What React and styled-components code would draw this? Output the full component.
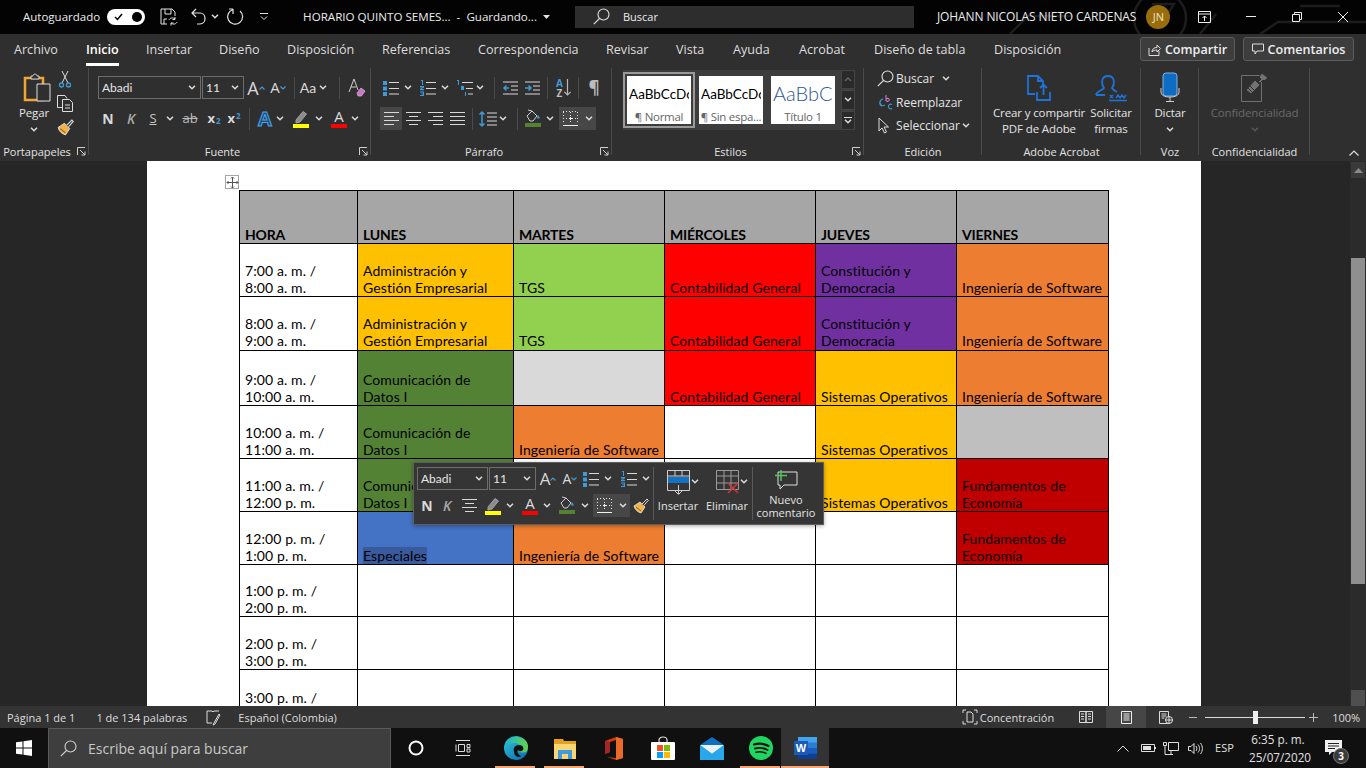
import React from "react";
import styled, { createGlobalStyle } from "styled-components";

const UI = `"Open Sans", "Noto Sans", "Liberation Sans", sans-serif`;
const Global = createGlobalStyle`
  html, body { margin: 0; padding: 0; background: #262626; }
  * { box-sizing: border-box; }
  #root { width: 1366px; height: 768px; overflow: hidden; }
`;

const Screen = styled.div`
  width: 1366px; height: 768px; display: flex; flex-direction: column;
  font-family: ${UI}; font-size: 12px; color: #e6e6e6; overflow: hidden; position: relative;
`;

/* ---------- drawing helpers ---------- */
const BLUE = "#3f9ad6";
const LN = "#d8d8d8";
const Svg = styled.svg`display: block; flex: none; overflow: visible;`;
const Ic = ({ w, h, children }) => (
  <Svg width={w} height={h} viewBox={`0 0 ${w} ${h}`} fill="none" stroke={LN} strokeWidth="1">{children}</Svg>
);
const Chev = ({ c = "#dcdcdc" }) => (
  <Ic w={8} h={5}><path d="M1 .8 4 3.8 7 .8" stroke={c} strokeWidth="1.5" /></Ic>
);
const Bullets = () => (
  <Ic w={16} h={16}>
    <path d="M0 1h4v4H0zM0 6.5h4v4H0zM0 12h4v4H0z" fill={BLUE} stroke="none" />
    <path d="M6 2.5h10M6 8.5h10M6 14h10" />
  </Ic>
);
const Numbers = () => (
  <Ic w={16} h={16}>
    <path d="M1 0h2v5H2V1H1zM0 6h4v1.4L1.6 9H4v1.2H0V9l2.4-1.6H0zM0 11.5h4v4.5H0v-1h3v-.8H1v-.8h2v-.8H0z" fill={BLUE} stroke="none" />
    <path d="M6 2.5h10M6 8.5h10M6 14h10" />
  </Ic>
);
const Multi = () => (
  <Ic w={16} h={16}>
    <path d="M0 0h2v5H1V1H0zM4 6h3v4H4zM8 12h1v4H8z" fill={BLUE} stroke="none" />
    <path d="M5 2.5h11M9 8.5h7M11 14h5" />
  </Ic>
);
const Indent = ({ right }) => (
  <Ic w={15} h={14}>
    <path d="M0 1h15M8 5h7M8 9h7M0 13h15" />
    {right
      ? <path d="M0 7h5M3.5 4.5 6 7l-2.5 2.5" stroke={BLUE} strokeWidth="1.5" />
      : <path d="M6 7H1M3.5 4.5 1 7l2.5 2.5" stroke={BLUE} strokeWidth="1.5" />}
  </Ic>
);
const SortArrow = () => (
  <Ic w={7} h={17}>
    <path d="M3.500 0v16M.3 12.800 3.500 16l3.200-3.200" stroke="#b8b8b8" strokeWidth="1.2" />
  </Ic>
);
const SortLetters = styled.span`
  display: flex; flex-direction: column; align-items: center; font-size: 10px; font-weight: 700; line-height: 10px; color: #bdbdbd; flex: none;
`;
const SortTop = styled.span`color: ${BLUE};`;
const Align = ({ kind = "left", c = LN }) => {
  const d = {
    left: "M0 .5h15M0 4.5h10M0 8.5h15M0 12.5h10",
    center: "M0 .5h15M3 4.5h9M0 8.5h15M3 12.5h9",
    right: "M0 .5h15M5 4.5h10M0 8.5h15M5 12.5h10",
    justify: "M0 .5h15M0 4.5h15M0 8.5h15M0 12.5h15",
  }[kind];
  return <Ic w={15} h={13}><path d={d} stroke={c} /></Ic>;
};
const Spacing = () => (
  <Ic w={18} h={16}>
    <path d="M3 1v14M.5 3.5 3 1l2.5 2.5M.5 12.5 3 15l2.5-2.5" stroke={BLUE} strokeWidth="1.5" />
    <path d="M8 2h10M8 6h10M8 10h10M8 14h10" />
  </Ic>
);
const Bucket = () => (
  <Ic w={16} h={19}>
    <path d="M2 7 7 2l5 5-4 5H5z" stroke="#cfcfcf" />
    <path d="M7 2 3 1" stroke="#cfcfcf" />
    <path d="M13 6c1 1.500 1.800 2.500 1.800 3.500h-2.600C12.200 8.500 12 7 13 6z" fill={BLUE} stroke="none" />
    <rect x="0" y="14" width="16" height="4" fill="#548235" stroke="none" />
  </Ic>
);
const Borders = () => (
  <Ic w={15} h={15}>
    <path d="M0 .5h15M0 7.500h15M.5 1v12M7.500 1v12M14.500 1v12" strokeDasharray="1 2" stroke="#e0e0e0" />
    <path d="M0 14.500h15" stroke="#f0f0f0" />
    <path d="M6 7.500h3M7.500 6v3" stroke="#f0f0f0" />
  </Ic>
);
const Pen = () => (
  <Ic w={16} h={18}>
    <path d="M3 10 10 1.500l3.500 2.500L7 12l-4 1z" stroke="#a0a0a0" fill="#8c8c8c" />
    <rect x="0" y="14" width="16" height="4" fill="#ffff00" stroke="none" />
  </Ic>
);
const Launcher = () => (
  <Ic w={9} h={9}>
    <path d="M.5 8V.5H8M3 3l5 5M8 4.500V8H4.500" stroke="#cfcfcf" />
  </Ic>
);
const BrushIcon = ({ s = 16 }) => (
  <Svg width={s} height={s} viewBox="0 0 16 16" fill="none">
    <path d="M1 8 7 4l5 5-4 6C5 14 2 12 1 8z" fill="#f0b34a" stroke="#e9e9e9" strokeWidth=".8" />
    <path d="M9 6 14 1l1.300 1.300-4.500 5.200" fill="#333" stroke="#dcdcdc" strokeWidth="1" />
    <path d="M3 9l5 4" stroke="#8a6420" />
  </Svg>
);
const ClearFmt = () => (
  <Ic w={17} h={20}>
    <path d="M1 14 6 1l4 11" stroke="#cfcfcf" />
    <path d="M3 9h5" stroke="#cfcfcf" />
    <path d="M9 15l4-5 4 3-3.500 5H10z" fill="#c778c4" stroke="#e6b4e6" strokeWidth=".7" />
  </Ic>
);
const GrowCaret = ({ down }) => (
  <Ic w={6} h={4}><path d={down ? "M.5.5 3 3 5.500.5" : "M.5 3.500 3 1l2.500 2.500"} stroke={BLUE} strokeWidth="1.200" /></Ic>
);
const Search = ({ s = 17, c = "#e0e0e0" }) => (
  <Svg width={s} height={s} viewBox="0 0 17 17" fill="none" stroke={c} strokeWidth="1.100">
    <circle cx="10.500" cy="6.500" r="5.500" /><path d="M6.500 10.500.8 16.200" />
  </Svg>
);

/* ---------- title bar ---------- */
const TitleBar = styled.div`
  height: 34px; flex: none; background: #030303; display: flex; align-items: center; position: relative; overflow: hidden; padding-bottom: 1px;
`;
const TitleArt = styled.svg`position: absolute; left: 860px; top: 0;`;
const TitleText = styled.span`
  font-size: ${p => p.$fs || 12}px; margin-left: ${p => p.$ml || 0}px; white-space: nowrap; color: #ececec; position: relative;
  letter-spacing: ${p => p.$ls || 0}px;
`;
const Toggle = styled.span`
  width: 38px; height: 16px; border-radius: 8px; background: #fff; margin-left: 7px; display: flex; align-items: center;
  justify-content: space-between; padding: 0 3px 0 7px; flex: none;
`;
const Knob = styled.i`width: 10px; height: 10px; background: #000; border-radius: 50%; display: block;`;
const QSlot = styled.span`
  margin-left: ${p => p.$ml || 0}px; display: flex; align-items: center; position: relative; flex: none;
`;
const SearchBox = styled.div`
  width: 339px; height: 22px; background: #2d2d2d; margin-left: 25px; display: flex; align-items: center; padding-left: 18px; flex: none;
  font-size: 12px; position: relative;
`;
const Avatar = styled.span`
  width: 24px; height: 24px; border-radius: 50%; background: #9a6d0c; color: #f1e3c2; margin-left: 10px; flex: none; position: relative;
  display: flex; align-items: center; justify-content: center; font-size: 11px;
`;

/* ---------- tabs ---------- */
const TabBar = styled.div`
  height: 32px; flex: none; background: #2f2f2f; display: flex; align-items: center; position: relative;
`;
const Tab = styled.span`
  font-size: 12.6px; width: ${p => p.$w}px; flex: none; white-space: nowrap; color: ${p => (p.$on ? "#fff" : "#dedede")};
  padding-left: 14px; height: 32px; line-height: 31px; position: relative; font-weight: ${p => (p.$on ? 600 : 400)};
  &::after {
    content: ""; display: ${p => (p.$on ? "block" : "none")}; position: absolute; left: 14px; bottom: 0; width: 33px; height: 3px; background: #fff;
  }
`;
const TabRight = styled.div`margin-left: auto; display: flex; gap: 8px; padding: 0 12px 2px 0;`;
const HeadBtn = styled.span`
  height: 24px; width: ${p => p.$w}px; border: 1px solid #5d5d5d; border-radius: 3px; background: #3d3d3d; display: flex; align-items: center;
  justify-content: center; gap: 4px; font-size: 12.6px; font-weight: 600; color: #eee;
`;

/* ---------- ribbon ---------- */
const Ribbon = styled.div`height: 95px; flex: none; background: #2f2f2f; display: flex; position: relative;`;
const Group = styled.div`
  width: ${p => p.$w}px; flex: none; height: 100%; position: relative; display: flex; flex-direction: column;
  &::after { content: ""; position: absolute; right: 0; top: 2px; bottom: 6px; width: 1px; background: #4b4b4b; display: ${p => (p.$last ? "none" : "block")}; }
`;
const GroupBody = styled.div`
  flex: 1; min-height: 0; display: flex; flex-direction: ${p => p.$dir || "column"}; padding-top: ${p => p.$pt ?? 0}px; padding-left: ${p => p.$pl || 0}px;
`;
const GroupLabel = styled.div`
  height: 18px; flex: none; text-align: center; font-size: 11px; line-height: 18px; color: #e2e2e2; white-space: nowrap;
  padding-right: ${p => (p.$launch ? 15 : 0)}px;
`;
const LaunchSlot = styled.span`position: absolute; right: 3px; bottom: 5px; display: block;`;
const Row = styled.div`
  display: flex; align-items: center; height: ${p => p.$h || 23}px; padding-left: ${p => p.$pl || 0}px; flex: none;
  margin-top: ${p => p.$mt || 0}px;
`;
const Slot = styled.span`
  width: ${p => p.$w}px; height: 23px; margin-left: ${p => p.$ml || 0}px; flex: none; display: flex; align-items: center; justify-content: center;
  gap: ${p => p.$gap || 0}px; background: ${p => (p.$sel ? "#474747" : "transparent")};
`;
const VSep = styled.i`display: block; width: 1px; height: 22px; background: #4b4b4b; margin-left: ${p => p.$ml || 0}px; flex: none;`;
const Select = styled.span`
  width: ${p => p.$w}px; height: 23px; border: 1px solid #6d6d6d; display: flex; align-items: center; justify-content: space-between;
  padding: 0 4px 0 3px; font-size: 12px; flex: none; margin-left: ${p => p.$ml || 0}px; color: #e6e6e6;
  font-family: "Lato", ${UI};
`;
const Glyph = styled.span`
  font-family: ${p => p.$f || UI}; font-size: ${p => p.$s || 14}px; font-weight: ${p => p.$b || 400}; font-style: ${p => (p.$i ? "italic" : "normal")};
  color: ${p => p.$c || "#d9d9d9"}; text-decoration: ${p => p.$d || "none"}; line-height: 1; display: flex; align-items: baseline; flex: none;
`;
const Sub = styled.span`font-size: 8px; color: ${BLUE}; margin-left: 1px; align-self: ${p => (p.$up ? "flex-start" : "flex-end")};`;
const ColorA = styled.span`
  display: flex; flex-direction: column; align-items: center; width: 16px; font-size: 15px; line-height: 14px; color: #dcdcdc;
  &::after { content: ""; display: block; width: 16px; height: 4px; background: ${p => p.$c}; margin-top: 1px; }
`;
const OutlineA = styled.span`
  font-size: 20px; font-weight: 700; color: #1d4f80; -webkit-text-stroke: 1px #4aa3e6; line-height: 1;
`;
const Big = styled.div`
  width: ${p => p.$w}px; margin-left: ${p => p.$ml || 0}px; flex: none; display: flex; flex-direction: column; align-items: center; padding-top: 4px;
  color: ${p => (p.$off ? "#6a6a6a" : "#e4e4e4")}; font-size: 11.5px; letter-spacing: -.12px;
`;
const BigIcon = styled.div`height: 35px; display: flex; align-items: center; justify-content: center; padding-left: ${p => p.$pl || 0}px;`;
const BigText = styled.div`line-height: 16px; text-align: center; white-space: nowrap;`;
const BigChev = styled.div`height: 16px; display: flex; align-items: center;`;
const SmallCol = styled.div`display: flex; flex-direction: column; align-items: center; width: 20px; padding-top: 5px; gap: 7px; margin-left: ${p => p.$ml || 0}px;`;
const Gallery = styled.div`
  width: 232px; height: 60px; margin: 4px 0 0 11px; background: #3d3d3d; display: flex; position: relative; padding: 6px 0 0 4px; gap: 8px;
`;
const StyleCard = styled.div`
  width: 64px; height: 48px; background: #fff; display: flex; flex-direction: column; align-items: center; justify-content: space-between;
  overflow: hidden; flex: none; margin-right: ${p => p.$mr || 0}px; outline: ${p => (p.$sel ? "2px solid #9a9a9a" : "none")}; outline-offset: 2px;
`;
const StylePreview = styled.div`
  font-family: "Lato", ${UI}; font-size: ${p => (p.$title ? 20 : 13.5)}px; font-weight: ${p => (p.$title ? 300 : 400)};
  color: ${p => (p.$title ? "#2f5496" : "#000")}; white-space: nowrap; width: 60px; overflow: hidden; margin-top: ${p => (p.$title ? 7 : 10)}px; line-height: ${p => (p.$title ? 20 : 16)}px;
`;
const StyleName = styled.div`font-size: 11.5px; letter-spacing: -.3px; color: #666; white-space: nowrap; line-height: 16px; margin-bottom: -1px; width: 64px; overflow: hidden; text-align: center;`;
const GalleryArrows = styled.div`position: absolute; right: 0; top: 0; width: 14px; height: 60px; display: flex; flex-direction: column; gap: 1px;`;
const GalleryArrow = styled.span`flex: 1; background: #2a2a2a; border: 1px solid #444; display: flex; align-items: center; justify-content: center; flex-direction: column; gap: 1px;`;
const EditRow = styled.div`height: 23.5px; display: flex; align-items: center; padding-left: ${p => p.$pl ?? 13}px; gap: ${p => p.$gap ?? 2}px; font-size: 12px; color: #e4e4e4;`;
const Collapse = styled.span`position: absolute; right: 7px; bottom: 5px; display: block;`;

/* ---------- document ---------- */
const DocArea = styled.div`flex: 1; min-height: 0; background: #262626; display: flex; position: relative; overflow: hidden;`;
const Page = styled.div`
  width: 1054px; margin-left: 147px; background: #fff; padding: 29px 0 0 92px; flex: none; overflow: hidden; position: relative;
`;
const Table = styled.div`
  display: grid; width: 870px; gap: 1px; background: #000; padding: 1px 1px 0; position: relative;
  grid-template-columns: 117px 155px 150px 150px 140px 151px;
  grid-template-rows: 52px 52px 53px 54px 52px 52px 52px 51px 52px 60px;
  font-family: "Lato", "Noto Sans", sans-serif; font-size: 14px; line-height: 17px; color: #000;
`;
const Cell = styled.div`
  background: ${p => p.$bg || "#fff"}; display: flex; flex-direction: column; justify-content: flex-end; padding: 0 4px ${p => p.$pb || 0}px 5px; white-space: nowrap;
  font-weight: ${p => (p.$head ? 700 : 400)}; letter-spacing: ${p => (p.$head ? "-.2px" : ".1px")};
  ${p => (p.$clip ? "justify-content: flex-start; padding-top: 19px;" : "")}
`;
const Selected = styled.span`background: #3a5a9e; align-self: flex-start;`;
const MoveHandle = styled.span`
  position: absolute; left: 78px; top: 14px; width: 14px; height: 14px; border: 1px solid #a6a6a6; background: #fff; display: flex; align-items: center; justify-content: center;
`;
const ScrollBar = styled.div`
  width: 16px; margin-left: auto; flex: none; background: #2b2b2b; display: flex; flex-direction: column; align-items: center; padding: 1px 1px 0;
`;
const ScrollBtn = styled.span`width: 14px; height: 16px; background: #3a3a3a; display: flex; align-items: center; justify-content: center; flex: none;`;
const ScrollThumb = styled.span`width: 14px; height: 326px; background: #8f8f8f; margin-top: 80px; flex: none; display: block;`;
const ScrollBottom = styled.span`width: 14px; height: 16px; background: #4f4f4f; margin-top: auto; display: block; flex: none;`;

/* ---------- floating toolbar ---------- */
const Mini = styled.div`
  position: absolute; left: 413px; top: 301px; width: 411px; height: 63px; background: #353535; border: 1px solid #5e5e5e;
  display: flex; font-size: 11.5px; color: #e4e4e4; box-shadow: 0 1px 4px rgba(0,0,0,.35);
`;
const MiniLeft = styled.div`width: 239px; flex: none; padding: 5px 0 0 3px; display: flex; flex-direction: column; gap: 5px;`;
const MiniSep = styled.i`display: block; width: 1px; height: 53px; margin: 4px 0 0 ${p => p.$ml || 0}px; background: #5a5a5a; flex: none;`;
const MiniBtn = styled.div`
  width: ${p => p.$w}px; margin-left: ${p => p.$ml || 0}px; flex: none; display: flex; flex-direction: column; align-items: center; padding-top: 7px; white-space: nowrap;
`;
const MiniIcon = styled.div`height: ${p => p.$h}px; position: relative; flex: none;`;
const MiniChev = styled.span`position: absolute; left: calc(100% + 1px); top: 9px; display: block;`;
const MiniText = styled.div`line-height: 13px; text-align: center; font-size: 11px;`;

/* ---------- status bar ---------- */
const StatusBar = styled.div`
  height: 22px; flex: none; background: #333; display: flex; align-items: center; font-size: 11px; color: #ddd; white-space: nowrap;
`;
const SText = styled.span`margin-left: ${p => p.$ml || 0}px; flex: none; font-size: 11px;`;
const SIcon = styled.span`
  margin-left: ${p => p.$ml || 0}px; flex: none; display: flex; align-items: center; justify-content: center; height: 22px; width: ${p => p.$w}px;
  background: ${p => (p.$sel ? "#464646" : "transparent")};
`;
const Slider = styled.span`
  width: 100px; height: 1px; background: #ddd; margin-left: ${p => p.$ml}px; position: relative; flex: none;
  &::after { content: ""; position: absolute; left: 48px; top: -6px; width: 5px; height: 13px; background: #eee; }
`;

/* ---------- taskbar ---------- */
const TaskBar = styled.div`
  height: 40px; flex: none; background: #101010; display: flex; align-items: center; color: #ddd; position: relative;
`;
const TaskSearch = styled.div`
  width: 343px; height: 40px; margin-left: 16px; background: #3e3e3e; border: 1px solid #5a5a5a; border-bottom: 0; display: flex; align-items: center; padding-left: 11px;
  gap: 11px; font-size: 14px; color: #c8c8c8; flex: none;
`;
const TaskIcon = styled.span`
  width: ${p => p.$w || 49}px; height: 40px; margin-left: ${p => p.$ml || 0}px; display: flex; align-items: center; justify-content: center; flex: none; position: relative;
  background: ${p => (p.$active ? "#333" : "transparent")};
  &::after {
    content: ""; display: ${p => (p.$run ? "block" : "none")}; position: absolute; left: ${p => p.$active ? 0 : 4}px; right: ${p => p.$active ? 0 : 5}px; bottom: 0; height: 2px; background: #f4a672;
  }
`;
const TrayIcon = styled.span`margin-left: ${p => p.$ml || 0}px; flex: none; display: flex; align-items: center;`;
const TrayText = styled.span`margin-left: ${p => p.$ml || 0}px; width: ${p => p.$w}px; flex: none; font-size: ${p => p.$fs || 11.5}px; text-align: center; line-height: 18px; color: #e0e0e0; white-space: nowrap;`;
const NoteWrap = styled.span`margin-left: 18px; position: relative; display: block; width: 17px; height: 16px; flex: none;`;
const Badge = styled.span`
  position: absolute; left: 8px; top: 8px; width: 16px; height: 16px; border-radius: 50%; background: #3a3a3a; border: 1px solid #777; color: #fff;
  font-size: 10px; font-weight: 700; display: flex; align-items: center; justify-content: center;
`;
const WordW = styled.span`
  position: absolute; left: 13px; top: 13px; width: 14px; height: 14px; background: #1c5bb5; color: #fff; font-size: 11px; font-weight: 700; line-height: 14px; text-align: center; font-family: "Liberation Sans", sans-serif;
`;

/* ---------- data ---------- */
const Y = "#FFC000", G = "#92D050", R = "#FF0000", P = "#7030A0", O = "#ED7D31", DG = "#548235", H = "#A6A6A6", DR = "#C00000", B = "#4472C4";
const ADM = ["Administración y", "Gestión Empresarial"];
const CON = ["Constitución y", "Democracia"];
const ING = ["Ingeniería de Software"];
const COM = ["Comunicación de", "Datos I"];
const FUN = ["Fundamentos de", "Economía"];
const rows = [
  [[["7:00 a. m. /", "8:00 a. m."]], [ADM, Y], [["TGS"], G], [["Contabilidad General"], R], [CON, P], [ING, O]],
  [[["8:00 a. m. /", "9:00 a. m."]], [ADM, Y], [["TGS"], G], [["Contabilidad General"], R], [CON, P], [ING, O]],
  [[["9:00 a. m. /", "10:00 a. m."]], [COM, DG], [[], "#D9D9D9"], [["Contabilidad General"], R], [["Sistemas Operativos"], Y], [ING, O]],
  [[["10:00 a. m. /", "11:00 a. m."]], [COM, DG], [ING, O], [[]], [["Sistemas Operativos"], Y], [[], "#BFBFBF"]],
  [[["11:00 a. m. /", "12:00 p. m."]], [COM, DG], [[]], [[]], [["Sistemas Operativos"], Y], [FUN, DR]],
  [[["12:00 p. m. /", "1:00 p. m."]], [["Especiales"], B, true], [ING, O], [[]], [[]], [FUN, DR]],
  [[["1:00 p. m. /", "2:00 p. m."]], [[]], [[]], [[]], [[]], [[]]],
  [[["2:00 p. m. /", "3:00 p. m."]], [[]], [[]], [[]], [[]], [[]]],
  [[["3:00 p. m. /"], "#fff", false, true], [[]], [[]], [[]], [[]], [[]]],
];
const heads = ["HORA", "LUNES", "MARTES", "MIÉRCOLES", "JUEVES", "VIERNES"];
const tabs = [
  ["Archivo", 72], ["Inicio", 60, true], ["Insertar", 73], ["Diseño", 68], ["Disposición", 95], ["Referencias", 96], ["Correspondencia", 128],
  ["Revisar", 70], ["Vista", 57], ["Ayuda", 66], ["Acrobat", 75], ["Diseño de tabla", 120], ["Disposición", 80],
];

const MiniFirstRow = () => (
  <Row $h={21}>
    <Select $w={71}>Abadi<Chev /></Select>
    <Select $w={47} $ml={1}>11<Chev /></Select>
    <Slot $w={16} $ml={4}><Glyph $s={17}>A</Glyph><GrowCaret /></Slot>
    <Slot $w={12} $ml={8}><Glyph $s={14}>A</Glyph><GrowCaret down /></Slot>
    <Slot $w={16} $ml={7}><Bullets /></Slot>
    <Slot $w={10} $ml={4}><Chev /></Slot>
    <Slot $w={16} $ml={8}><Numbers /></Slot>
    <Slot $w={10} $ml={4}><Chev /></Slot>
  </Row>
);

const MiniSecondRow = () => (
  <Row>
    <Slot $w={18} $ml={1}><Glyph $s={14} $b={700}>N</Glyph></Slot>
    <Slot $w={14} $ml={4}><Glyph $s={14} $i $b={600} $c="#a8a8a8">K</Glyph></Slot>
    <Slot $w={15} $ml={8}><Align kind="center" /></Slot>
    <Slot $w={16} $ml={8}><Pen /></Slot>
    <Slot $w={10} $ml={4}><Chev /></Slot>
    <Slot $w={16} $ml={7}><ColorA $c="#ff0000">A</ColorA></Slot>
    <Slot $w={10} $ml={4}><Chev /></Slot>
    <Slot $w={16} $ml={7}><Bucket /></Slot>
    <Slot $w={10} $ml={5}><Chev /></Slot>
    <Slot $w={37} $ml={3} $sel $gap={7}><Borders /><Chev /></Slot>
    <Slot $w={16} $ml={3}><BrushIcon /></Slot>
  </Row>
);

export default function App() {
  return (
    <Screen>
      <Global />
      <TitleBar>
        <TitleArt width="506" height="34" viewBox="0 0 506 34" fill="none" stroke="#1d1d1d" strokeWidth="2.500">
          <circle cx="300" cy="18" r="26" />
          <path d="M292 4h22l-14 22M150 34l18-18h44M400 34l18-12h88M440 6l40 0M340 34l16-20" />
        </TitleArt>
        <TitleText $ml={23} $fs={11.5}>Autoguardado</TitleText>
        <Toggle>
          <Ic w={9} h={8}><path d="M1 4l2.500 2.500L8 1" stroke="#000" strokeWidth="1.500" /></Ic>
          <Knob />
        </Toggle>
        <QSlot $ml={15}>
          <Ic w={18} h={18}>
            <path d="M1 1h11l3 3v4M5 1v5h6V1M1 1v15h6M4 16v-5h3" stroke="#e4e4e4" />
            <path d="M9 12c.5-2 4-3 6-1M17 14c-.5 2-4 3-6 1M15 9v2.500h-2.500M11 17.500V15h2.500" stroke="#e4e4e4" />
          </Ic>
        </QSlot>
        <QSlot $ml={13}>
          <Ic w={16} h={17}><path d="M5 1 1 5l4 4M1 5h8c3 0 5 2.500 5 5.500S12 16 9 16H6" stroke="#e4e4e4" strokeWidth="1.200" /></Ic>
        </QSlot>
        <QSlot $ml={4}><Chev /></QSlot>
        <QSlot $ml={9}>
          <Ic w={16} h={17}><path d="M5 1.500A7.500 7.500 0 1 0 12 3M5 1v5M1 1h4" stroke="#e4e4e4" strokeWidth="1.200" /></Ic>
        </QSlot>
        <QSlot $ml={16}>
          <Ic w={8} h={7}><path d="M0 .5h8M1 3.500l3 3 3-3" stroke="#dcdcdc" /></Ic>
        </QSlot>
        <TitleText $ml={35} $fs={11.6}>HORARIO QUINTO SEMES...&nbsp;&nbsp;-&nbsp;&nbsp;Guardando...</TitleText>
        <QSlot $ml={6}><Ic w={7} h={4}><path d="M0 0h7L3.500 4z" fill="#e4e4e4" stroke="none" /></Ic></QSlot>
        <SearchBox>
          <Search />
          <TitleText $ml={13} $fs={11}>Buscar</TitleText>
        </SearchBox>
        <TitleText $ml={23} $fs={12} $ls={-0.1}>JOHANN NICOLAS NIETO CARDENAS</TitleText>
        <Avatar>JN</Avatar>
        <QSlot $ml={28}>
          <Ic w={13} h={12}><path d="M.5.5h12v11H.5zM.5 3h12M6.500 10V5M4.500 7l2-2 2 2" stroke="#eee" /></Ic>
        </QSlot>
        <QSlot $ml={35}><Ic w={10} h={1}><path d="M0 .5h10" stroke="#eee" /></Ic></QSlot>
        <QSlot $ml={36}><Ic w={10} h={10}><path d="M.5 2.500h7v7h-7zM2.500 2.500v-2h7v7h-2" stroke="#eee" /></Ic></QSlot>
        <QSlot $ml={36}><Ic w={10} h={10}><path d="M0 0l10 10M10 0 0 10" stroke="#eee" /></Ic></QSlot>
      </TitleBar>

      <TabBar>
        {tabs.map(([t, w, on]) => <Tab key={t + w} $w={w} $on={on}>{t}</Tab>)}
        <TabRight>
          <HeadBtn $w={95}>
            <Ic w={13} h={13}><path d="M1 5v7.500h10V8M4 9c0-3 2-4.500 5-4.500V2l3.500 3.500L9 9V7C7 7 5 7.500 4 9z" stroke="#ddd" /></Ic>
            Compartir
          </HeadBtn>
          <HeadBtn $w={111}>
            <Ic w={12} h={12}><path d="M.5 1h11v7H5l-2 3V8H.5z" stroke="#ddd" /></Ic>
            Comentarios
          </HeadBtn>
        </TabRight>
      </TabBar>

      <Ribbon>
        <Group $w={89}>
          <GroupBody $dir="row">
            <Big $w={50} $ml={9}>
              <BigIcon $pl={5}>
                <Ic w={28} h={29}>
                  <path d="M2 5h18v22H2z" stroke="#f2a530" strokeWidth="2.500" />
                  <path d="M8 6V3h2c0-2.500 4-2.500 4 0h2v3z" fill="#2f2f2f" stroke="#d8d8d8" />
                  <path d="M14 11h13v17H14z" fill="#2f2f2f" stroke="#e0e0e0" />
                </Ic>
              </BigIcon>
              <BigText>Pegar</BigText>
              <BigChev><Chev /></BigChev>
            </Big>
            <SmallCol $ml={-4}>
              <Ic w={12} h={17}>
                <path d="M3 0l6 12M9 0 3 12" stroke="#ddd" />
                <circle cx="2.500" cy="14" r="2" stroke={BLUE} strokeWidth="1.300" />
                <circle cx="9.500" cy="14" r="2" stroke={BLUE} strokeWidth="1.300" />
              </Ic>
              <Ic w={16} h={17}>
                <path d="M5 12.500H.5V.5H8l2 3" stroke="#ddd" />
                <path d="M5.500 4.500h7l3 3v9h-10z" fill="#2f2f2f" stroke="#ddd" />
                <path d="M8 10h5M8 13h5" stroke="#ddd" />
              </Ic>
              <BrushIcon s={17} />
            </SmallCol>
          </GroupBody>
          <GroupLabel $launch>Portapapeles</GroupLabel>
          <LaunchSlot><Launcher /></LaunchSlot>
        </Group>

        <Group $w={282}>
          <GroupBody $pt={10}>
            <Row $pl={9}>
              <Select $w={103}>Abadi<Chev /></Select>
              <Select $w={42} $ml={1}>11<Chev /></Select>
              <Slot $w={22} $ml={1}><Glyph $s={18}>A</Glyph><GrowCaret /></Slot>
              <Slot $w={22} $ml={0}><Glyph $s={15}>A</Glyph><GrowCaret down /></Slot>
              <VSep $ml={5} />
              <Slot $w={37} $gap={3} $ml={0}><Glyph $s={14} $f={`"Lato", sans-serif`}>Aa</Glyph><Chev /></Slot>
              <VSep $ml={7} />
              <Slot $w={32}><ClearFmt /></Slot>
            </Row>
            <Row $pl={9} $mt={8}>
              <Slot $w={20}><Glyph $s={14} $b={700}>N</Glyph></Slot>
              <Slot $w={26}><Glyph $s={14} $i $c="#a8a8a8" $b={600}>K</Glyph></Slot>
              <Slot $w={18}><Glyph $s={13} $d="underline" $c="#c4c4c4">S</Glyph></Slot>
              <Slot $w={16}><Chev /></Slot>
              <Slot $w={24}><Glyph $s={13} $d="line-through" $c="#bbb">ab</Glyph></Slot>
              <Slot $w={24}><Glyph $s={13} $b={700}>x<Sub>2</Sub></Glyph></Slot>
              <Slot $w={16}><Glyph $s={13} $b={700}>x<Sub $up>2</Sub></Glyph></Slot>
              <VSep $ml={7} />
              <Slot $w={20} $ml={5}><OutlineA>A</OutlineA></Slot>
              <Slot $w={10}><Chev /></Slot>
              <Slot $w={22} $ml={5}><Pen /></Slot>
              <Slot $w={10} $ml={2}><Chev /></Slot>
              <Slot $w={22} $ml={4}><ColorA $c="#ff0000">A</ColorA></Slot>
              <Slot $w={10}><Chev /></Slot>
            </Row>
          </GroupBody>
          <GroupLabel $launch>Fuente</GroupLabel>
          <LaunchSlot><Launcher /></LaunchSlot>
        </Group>

        <Group $w={241}>
          <GroupBody $pt={10}>
            <Row $pl={12}>
              <Slot $w={16}><Bullets /></Slot>
              <Slot $w={10} $ml={4}><Chev /></Slot>
              <Slot $w={16} $ml={7}><Numbers /></Slot>
              <Slot $w={10} $ml={4}><Chev /></Slot>
              <Slot $w={16} $ml={7}><Multi /></Slot>
              <Slot $w={10} $ml={2}><Chev /></Slot>
              <VSep $ml={9} />
              <Slot $w={15} $ml={8}><Indent /></Slot>
              <Slot $w={15} $ml={7}><Indent right /></Slot>
              <VSep $ml={7} />
              <Slot $w={17} $ml={7} $gap={1}>
                <SortLetters><SortTop>A</SortTop>Z</SortLetters>
                <SortArrow />
              </Slot>
              <VSep $ml={6} />
              <Slot $w={14} $ml={8}><Glyph $s={17} $b={700} $c="#bcbcbc">¶</Glyph></Slot>
            </Row>
            <Row $pl={9} $mt={8}>
              <Slot $w={22} $sel><Align kind="left" /></Slot>
              <Slot $w={15} $ml={4}><Align kind="center" /></Slot>
              <Slot $w={15} $ml={7}><Align kind="right" /></Slot>
              <Slot $w={15} $ml={7}><Align kind="justify" /></Slot>
              <VSep $ml={7} />
              <Slot $w={18} $ml={6}><Spacing /></Slot>
              <Slot $w={10} $ml={1}><Chev /></Slot>
              <VSep $ml={9} />
              <Slot $w={16} $ml={7}><Bucket /></Slot>
              <Slot $w={10} $ml={4}><Chev /></Slot>
              <Slot $w={37} $ml={4} $sel $gap={7}><Borders /><Chev /></Slot>
            </Row>
          </GroupBody>
          <GroupLabel $launch>Párrafo</GroupLabel>
          <LaunchSlot><Launcher /></LaunchSlot>
        </Group>

        <Group $w={252}>
          <GroupBody>
            <Gallery>
              <StyleCard $sel>
                <StylePreview>AaBbCcDc</StylePreview>
                <StyleName>¶ Normal</StyleName>
              </StyleCard>
              <StyleCard>
                <StylePreview>AaBbCcDc</StylePreview>
                <StyleName>¶ Sin espa...</StyleName>
              </StyleCard>
              <StyleCard>
                <StylePreview $title>AaBbCc</StylePreview>
                <StyleName>Título 1</StyleName>
              </StyleCard>
              <GalleryArrows>
                <GalleryArrow><Ic w={8} h={5}><path d="M1 4 4 1l3 3" stroke="#666" strokeWidth="1.300" /></Ic></GalleryArrow>
                <GalleryArrow><Chev /></GalleryArrow>
                <GalleryArrow>
                  <Ic w={8} h={1}><path d="M0 .5h8" stroke="#ddd" /></Ic>
                  <Chev />
                </GalleryArrow>
              </GalleryArrows>
            </Gallery>
          </GroupBody>
          <GroupLabel $launch>Estilos</GroupLabel>
          <LaunchSlot><Launcher /></LaunchSlot>
        </Group>

        <Group $w={118}>
          <GroupBody $pt={1}>
            <EditRow><Search s={17} /> Buscar&nbsp;&nbsp;<Chev /></EditRow>
            <EditRow>
              <Ic w={17} h={17}>
                <path d="M5 12c-3-1-3-6 1-7" stroke={BLUE} strokeWidth="1.200" />
                <path d="M3 9l2 3 3-1" stroke={BLUE} />
                <path d="M9 1v6M9 5c2-1.500 4 0 3 1.500S9 7.500 9 6" stroke="#c778c4" strokeWidth="1.100" />
                <path d="M15 10.500c-2-1-3.500 0-3.500 2s2 3 3.500 2" stroke={BLUE} strokeWidth="1.100" />
              </Ic>
              Reemplazar
            </EditRow>
            <EditRow>
              <Ic w={14} h={17}><path d="M2 1v13l3-3 2.500 5 2-1-2.500-5h4.500z" stroke="#ddd" /></Ic>
              &nbsp;Seleccionar<Chev />
            </EditRow>
          </GroupBody>
          <GroupLabel>Edición</GroupLabel>
        </Group>

        <Group $w={159}>
          <GroupBody $dir="row">
            <Big $w={104} $ml={5}>
              <BigIcon>
                <Ic w={24} h={26}>
                  <path d="M8 19H1V1h10l5 5v5" stroke="#1e72d8" strokeWidth="1.800" />
                  <path d="M11 1v5h5" stroke="#1e72d8" strokeWidth="1.800" />
                  <path d="M10 17v8h13v-8M16.500 20V10M13 13l3.500-3.500L20 13" stroke="#1e72d8" strokeWidth="1.800" />
                </Ic>
              </BigIcon>
              <BigText>Crear y compartir<br />PDF de Adobe</BigText>
            </Big>
            <Big $w={40}>
              <BigIcon>
                <Ic w={32} h={26}>
                  <path d="M1 20c0-4 6-4 8-7-3-4-3-12 4-12s7 8 4 12c1 2 3 3 5 4M1 20h9" stroke="#1e72d8" strokeWidth="1.800" />
                  <path d="M15 20l3 3M18 20l-3 3M21 23l2-3 2 3 2-3 2 3 2-3M14 25.500h18" stroke="#1e72d8" strokeWidth="1.500" />
                </Ic>
              </BigIcon>
              <BigText>Solicitar<br />firmas</BigText>
            </Big>
          </GroupBody>
          <GroupLabel>Adobe Acrobat</GroupLabel>
        </Group>

        <Group $w={58}>
          <GroupBody>
            <Big $w={58}>
              <BigIcon>
                <Ic w={20} h={29}>
                  <rect x="3" y="0" width="14" height="23" rx="3" fill="#0f6cc4" stroke="#7fb2e0" />
                  <path d="M1 15v4c0 3 3 5 9 5s9-2 9-5v-4M10 24v4M6 28.500h8" stroke="#d0d0d0" />
                </Ic>
              </BigIcon>
              <BigText>Dictar</BigText>
              <BigChev><Chev /></BigChev>
            </Big>
          </GroupBody>
          <GroupLabel>Voz</GroupLabel>
        </Group>

        <Group $w={111}>
          <GroupBody>
            <Big $w={111} $off>
              <BigIcon>
                <Ic w={27} h={29}>
                  <path d="M.5 2.500h20v26H.5z" stroke="#707070" />
                  <path d="M5 17 14 7l5 5-9 9z" fill="#727272" stroke="#2f2f2f" />
                  <path d="M7 15l6 6M9 13l6 6" stroke="#2f2f2f" />
                  <path d="M17 9l3-3-2-2 3-4 6 5-4 3-1-1-3 3z" fill="#727272" stroke="#2f2f2f" />
                </Ic>
              </BigIcon>
              <BigText>Confidencialidad</BigText>
              <BigChev><Chev c="#5a5a5a" /></BigChev>
            </Big>
          </GroupBody>
          <GroupLabel>Confidencialidad</GroupLabel>
        </Group>
        <Collapse>
          <Ic w={10} h={6}><path d="M.5 5.500 5 1l4.500 4.500" stroke="#ddd" strokeWidth="1.200" /></Ic>
        </Collapse>
      </Ribbon>

      <DocArea>
        <Page>
          <MoveHandle>
            <Ic w={11} h={11}><path d="M5.500 0v11M0 5.500h11M4 1.500 5.500 0 7 1.500M4 9.500 5.500 11 7 9.500M1.500 4 0 5.500 1.500 7M9.500 4 11 5.500 9.500 7" stroke="#555" /></Ic>
          </MoveHandle>
          <Table>
            {heads.map(h => <Cell key={h} $bg={H} $head><div>{h}</div></Cell>)}
            {rows.flatMap((r, i) =>
              r.map(([lines, bg, sel, clip], j) => (
                <Cell key={`${i}-${j}`} $bg={bg} $clip={clip} $pb={i === 1 ? 1 : 0}>
                  {lines.map(l => (sel ? <Selected key={l}>{l}</Selected> : <div key={l}>{l}</div>))}
                </Cell>
              ))
            )}
          </Table>
        </Page>
        <ScrollBar>
          <ScrollBtn><Ic w={9} h={5}><path d="M0 5 4.500 0 9 5z" fill="#8a8a8a" stroke="none" /></Ic></ScrollBtn>
          <ScrollThumb />
          <ScrollBottom />
        </ScrollBar>
        <Mini>
          <MiniLeft>
            <MiniFirstRow />
            <MiniSecondRow />
          </MiniLeft>
          <MiniSep />
          <MiniBtn $w={46} $ml={1}>
            <MiniIcon $h={29}>
              <Ic w={23} h={25}>
                <path d="M.5.5h22v20H.5zM.5 6h22M8 .5V6M15 .5V6" stroke="#cfcfcf" />
                <rect x="1" y="7" width="21" height="6" fill="#1272c6" stroke="none" />
                <path d="M11.500 15v9M7 20l4.500 4.500L16 20" stroke="#cfcfcf" />
              </Ic>
              <MiniChev><Chev /></MiniChev>
            </MiniIcon>
            <MiniText>Insertar</MiniText>
          </MiniBtn>
          <MiniBtn $w={46} $ml={3}>
            <MiniIcon $h={29}>
              <Ic w={23} h={25}>
                <path d="M.5.5h22v19H.5zM.5 6h22M.5 13h22M8 .5v19M15 .5v19" stroke="#9a9a9a" />
                <path d="M12 13l10 10M22 13 12 23" stroke="#d13438" strokeWidth="1.500" />
              </Ic>
              <MiniChev><Chev /></MiniChev>
            </MiniIcon>
            <MiniText>Eliminar</MiniText>
          </MiniBtn>
          <MiniSep $ml={2} />
          <MiniBtn $w={66}>
            <MiniIcon $h={23}>
              <Ic w={23} h={21}>
                <path d="M3 2h19v13H9l-4 4v-4H3z" stroke="#ddd" />
                <path d="M6 0v11M0 5.500h12" stroke="#52c75a" strokeWidth="1.500" />
              </Ic>
            </MiniIcon>
            <MiniText>Nuevo<br />comentario</MiniText>
          </MiniBtn>
        </Mini>
      </DocArea>

      <StatusBar>
        <SText $ml={7}>Página 1 de 1</SText>
        <SText $ml={21}>1 de 134 palabras</SText>
        <SIcon $w={14} $ml={19}>
          <Ic w={14} h={14}><path d="M1 1h5l1 1 1-1h5M1 1v12h5M8 13l5-9 1 1-5 9-2 1z" stroke="#ddd" /></Ic>
        </SIcon>
        <SText $ml={18}>Español (Colombia)</SText>
        <SIcon $w={14} $ml={626}>
          <Ic w={14} h={14}><path d="M0 3V0h3M11 0h3v3M0 11v3h3M11 14h3v-3M4 2h4l2 2v8H4z" stroke="#ddd" /></Ic>
        </SIcon>
        <SText $ml={3}>Concentración</SText>
        <SIcon $w={14} $ml={25}>
          <Ic w={14} h={12}><path d="M.5.500H7v11H.5zM7 .5h6.500v11H7zM2 3h3M2 5.500h3M2 8h3M9 3h3M9 5.500h3M9 8h3" stroke="#ddd" /></Ic>
        </SIcon>
        <SIcon $w={40} $ml={13} $sel>
          <Ic w={11} h={13}><path d="M.5.5h10v12H.5zM2.500 3h6M2.500 5h6M2.500 7h6M2.500 9h6" stroke="#eee" /></Ic>
        </SIcon>
        <SIcon $w={14} $ml={13}>
          <Ic w={14} h={13}>
            <path d="M.5.5h9v12H.5zM2.500 3h5M2.500 5h5M2.500 7h3" stroke="#ddd" />
            <circle cx="10" cy="9" r="3.500" fill="#333" stroke="#ddd" /><path d="M6.500 9h7M10 5.500v7" stroke="#ddd" />
          </Ic>
        </SIcon>
        <SIcon $w={8} $ml={16}><Ic w={8} h={1}><path d="M0 .5h8" stroke="#bbb" /></Ic></SIcon>
        <Slider $ml={8} />
        <SIcon $w={9} $ml={4}><Ic w={9} h={9}><path d="M0 4.500h9M4.500 0v9" stroke="#bbb" /></Ic></SIcon>
        <SText $ml={14}>100%</SText>
      </StatusBar>

      <TaskBar>
        <TaskIcon $w={16} $ml={16}>
          <Ic w={16} h={16}><path d="M0 2.300 6.500 1.400v6.200H0zM7.500 1.300 16 0v7.600H7.500zM0 8.500h6.500v6.100L0 13.700zM7.500 8.500H16V16l-8.500-1.200z" fill="#fff" stroke="none" /></Ic>
        </TaskIcon>
        <TaskSearch><Search c="#d0d0d0" />Escribe aquí para buscar</TaskSearch>
        <TaskIcon $w={50}>
          <Ic w={16} h={16}><circle cx="8" cy="8" r="6.500" stroke="#fff" strokeWidth="2" /></Ic>
        </TaskIcon>
        <TaskIcon $w={44}>
          <Ic w={16} h={16}><path d="M1 .5h14M1 15.500h14M3.500 4.500h6v7h-6zM1 4.500v7M12 4.500h3v3h-3zM12 9h3v3h-3z" stroke="#ddd" /></Ic>
        </TaskIcon>
        <TaskIcon $w={49} $ml={6} $run>
          <Svg width="24" height="24" viewBox="0 0 24 24">
            <defs>
              <linearGradient id="edgeA" x1="0" y1="0" x2="1" y2="1"><stop offset="0" stopColor="#2ecad8" /><stop offset="1" stopColor="#0b62b0" /></linearGradient>
              <linearGradient id="edgeB" x1="0" y1="0" x2="1" y2="0"><stop offset="0" stopColor="#20b8c8" /><stop offset="1" stopColor="#62d24a" /></linearGradient>
            </defs>
            <circle cx="12" cy="12" r="12" fill="url(#edgeA)" />
            <path d="M3 8C5 1 14-1 20 3c4 3 5 8 3 12-2 2-6 2-8 0 3-3 1-8-4-8-3 0-6 1-8 1z" fill="url(#edgeB)" />
            <path d="M10 16c-1-4 1-7 5-7s5 3 4 5c-2 2-4 1-5 0-1 1-1 4 3 6 1 .5-6 3-7-4z" fill="#101010" />
          </Svg>
        </TaskIcon>
        <TaskIcon $w={49} $run>
          <Svg width="22" height="21" viewBox="0 0 22 21">
            <path d="M0 1h9l1 2h12v18H0z" fill="#e3a021" />
            <path d="M0 6h22v15H0z" fill="#f9d671" />
            <path d="M4 12h14v9h-4v-5H8v5H4z" fill="#3f9ae0" />
          </Svg>
        </TaskIcon>
        <TaskIcon $w={49}>
          <Svg width="18" height="23" viewBox="0 0 18 23">
            <path d="M0 4 11 0l7 2v19l-7 2-9-3 9 1V3L5 5v10l-5 2z" fill="#d83b01" />
            <path d="M0 4l5 1v10l-5 2z" fill="#a4262c" />
            <path d="M11 0l7 2v19l-7 2z" fill="#ea6a2a" />
          </Svg>
        </TaskIcon>
        <TaskIcon $w={49}>
          <Svg width="24" height="24" viewBox="0 0 24 24">
            <path d="M8 6V4c0-4 8-4 8 0v2" fill="none" stroke="#ddd" strokeWidth="1.200" />
            <rect x="0" y="6" width="24" height="18" rx="1" fill="#fff" />
            <rect x="6" y="9" width="6" height="6" fill="#f25022" /><rect x="13" y="9" width="6" height="6" fill="#7fba00" />
            <rect x="6" y="16" width="6" height="6" fill="#00a4ef" /><rect x="13" y="16" width="6" height="6" fill="#ffb900" />
          </Svg>
        </TaskIcon>
        <TaskIcon $w={49}>
          <Svg width="24" height="23" viewBox="0 0 24 23">
            <path d="M0 8 12 0l12 8v15H0z" fill="#0f6fc0" />
            <path d="M0 8h24L12 17z" fill="#e8f3fb" />
            <path d="M0 8l12 9 12-9v15H0z" fill="#28a8ea" />
          </Svg>
        </TaskIcon>
        <TaskIcon $w={49} $run>
          <Svg width="24" height="24" viewBox="0 0 24 24" fill="none" stroke="#111" strokeLinecap="round">
            <circle cx="12" cy="12" r="12" fill="#1ed760" stroke="none" />
            <path d="M5 8.500c5-1.500 10-1 14.500 1.500" strokeWidth="2.200" />
            <path d="M6 12.500c4-1 8.500-.8 12.500 1.500" strokeWidth="1.900" />
            <path d="M7 16.200c3.500-.8 7-.5 10 1.200" strokeWidth="1.600" />
          </Svg>
        </TaskIcon>
        <TaskIcon $w={48} $ml={-4} $run $active>
          <Svg width="24" height="22" viewBox="0 0 24 22">
            <rect x="5" y="0" width="19" height="22" rx="1" fill="#2b7cd3" />
            <rect x="5" y="0" width="19" height="5.500" fill="#41a5ee" />
            <rect x="5" y="11" width="19" height="5.500" fill="#185abd" />
            <rect x="5" y="16.500" width="19" height="5.500" fill="#103f91" />
          </Svg>
          <WordW>W</WordW>
        </TaskIcon>
        <TrayIcon $ml={288}><Ic w={12} h={7}><path d="M.5 6.500 6 1l5.500 5.500" stroke="#e0e0e0" /></Ic></TrayIcon>
        <TrayIcon $ml={12}>
          <Ic w={15} h={8}><path d="M.5.5h13v7H.5z" stroke="#e0e0e0" /><path d="M2 2h8v4H2zM14 3h1v2h-1z" fill="#e0e0e0" stroke="none" /></Ic>
        </TrayIcon>
        <TrayIcon $ml={7}>
          <Ic w={16} h={13}><path d="M5.500.5h10v8h-10zM.5.5h3v3h-3zM2 4v8.500h8M8 9v3.500" stroke="#e0e0e0" /></Ic>
        </TrayIcon>
        <TrayIcon $ml={9}>
          <Ic w={15} h={13}><path d="M.5 4.500h2.500L6 1.500v10l-3-3H.5zM8 4c1 1.500 1 3.500 0 5M10 2.500c2 2.500 2 5.500 0 8M12.500 1c2.500 3.500 2.500 7.500 0 11" stroke="#e0e0e0" /></Ic>
        </TrayIcon>
        <TrayText $ml={12} $w={19} $fs={11}>ESP</TrayText>
        <TrayText $ml={15} $w={58} $fs={11.7}>6:35 p. m.<br />25/07/2020</TrayText>
        <NoteWrap>
          <Ic w={17} h={16}><path d="M0 0h17v12H7l-3 3v-3H0z" fill="#f0f0f0" stroke="none" /><path d="M3 3.500h11M3 6h11M3 8.500h7" stroke="#222" /></Ic>
          <Badge>3</Badge>
        </NoteWrap>
      </TaskBar>
    </Screen>
  );
}
